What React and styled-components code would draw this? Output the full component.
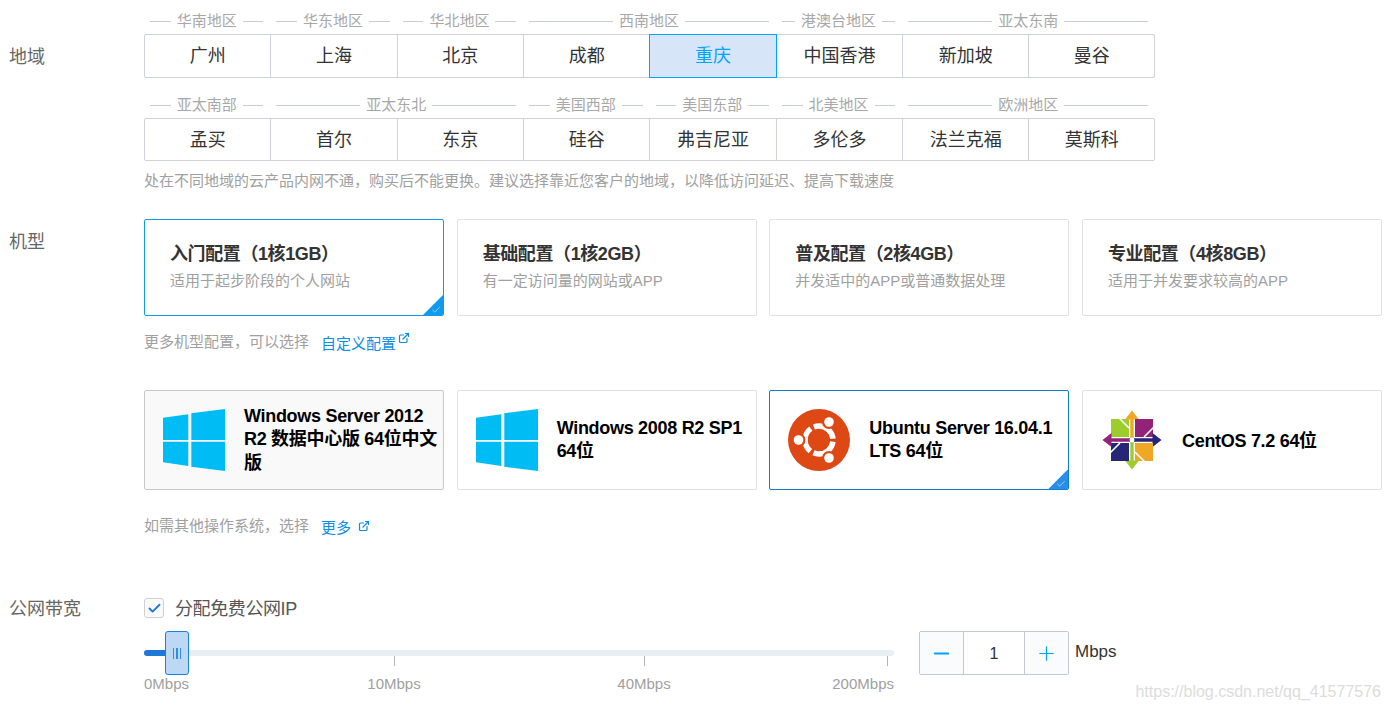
import React from "react";
import styled, { createGlobalStyle } from "styled-components";
import { Check, ExternalLink, Minus, Plus } from "lucide-react";

const GlobalStyle = createGlobalStyle`
  html, body {
    margin: 0;
    padding: 0;
    background: #fff;
    overflow: hidden;
  }
  body {
    font-family: "Liberation Sans", "Noto Sans CJK SC", sans-serif;
  }
`;

const Page = styled.div`
  position: relative;
  width: 1390px;
  height: 711px;
  padding: 8px 8px 0 9px;
  box-sizing: border-box;
`;

const Row = styled.section`
  display: flex;
  margin-top: ${(props) => props.$top || 0}px;
`;

const Label = styled.div`
  flex: 0 0 135px;
  font-size: 18px;
  line-height: 24px;
  color: #666;
  padding-top: ${(props) => props.$pad || 0}px;
`;

const Content = styled.div`
  width: 1238px;
`;

const Regions = styled.div`
  width: 1011px;
`;

const Groups = styled.div`
  display: grid;
  grid-template-columns: repeat(8, 1fr);
  height: 26px;
  margin-top: ${(props) => props.$top || 0}px;
`;

const Group = styled.div`
  grid-column: span ${(props) => props.$span || 1};
  display: flex;
  align-items: center;
  gap: 6px;
  margin: 0 7px 0 6px;
  height: 26px;
  font-size: 15px;
  color: #a8a8a8;
  white-space: nowrap;

  &::before,
  &::after {
    content: "";
    flex: 1;
    height: 1px;
    margin-top: 1px;
    background: #c8ccd8;
  }
`;

const GroupName = styled.span`
  margin-bottom: 3px;
`;

const Cities = styled.div`
  display: grid;
  grid-template-columns: repeat(7, 126.35px) 1fr;
  height: ${(props) => props.$height}px;
  box-sizing: border-box;
  border: 1px solid #cfd2dc;
  border-radius: 2px;
`;

const City = styled.div`
  display: flex;
  align-items: center;
  justify-content: center;
  padding-bottom: 4px;
  font-size: 18px;
  color: ${(props) => (props.$active ? "#00a4ff" : "#333")};
  background: ${(props) => (props.$active ? "#d6e5f8" : "transparent")};
  box-sizing: border-box;
  border-right: ${(props) => (props.$active ? "0" : "1px solid #cfd2dc")};
  margin-right: ${(props) => (props.$active ? 1 : 0)}px;
  outline: ${(props) => (props.$active ? "1px solid #00a4ff" : "none")};

  &:last-child {
    border-right: 0;
  }
`;

const Hint = styled.div`
  display: flex;
  align-items: center;
  box-sizing: border-box;
  height: 20px;
  padding-bottom: 3px;
  margin-top: ${(props) => props.$top || 0}px;
  font-size: 15px;
  color: #a0a0a0;
  white-space: nowrap;
`;

const MoreLink = styled.span`
  display: inline-flex;
  align-items: flex-start;
  gap: ${(props) => props.$gap || 2}px;
  margin-left: 12px;
  margin-top: 4px;
  color: #0a8ee8;

  svg {
    margin-top: ${(props) => props.$iconTop || 0}px;
  }
`;

const Cards = styled.div`
  display: grid;
  grid-template-columns: repeat(4, 300px);
  column-gap: 12.67px;
  margin-top: ${(props) => props.$top || 0}px;
`;

const Card = styled.div`
  position: relative;
  height: ${(props) => props.$height}px;
  box-sizing: border-box;
  border: 1px solid ${(props) => props.$accent || (props.$muted ? "#c8c8c8" : "#dfe1e6")};
  border-radius: 2px;
  background: ${(props) => (props.$muted ? "#f9f9f9" : "#fff")};
  overflow: hidden;
`;

const PlanCard = styled(Card)`
  padding: 21px 0 0 25px;
`;

const PlanTitle = styled.div`
  font-size: 18px;
  line-height: 26px;
  font-weight: 700;
  letter-spacing: -0.4px;
  color: #333;
`;

const PlanText = styled.div`
  margin-top: 1px;
  font-size: 15px;
  line-height: 26px;
  color: #a0a0a0;
`;

const OsCard = styled(Card)`
  display: flex;
  align-items: center;
  padding: 0 2px 0 18px;
  gap: 19px;
`;

const OsLogo = styled.svg`
  flex: 0 0 62px;
  width: 62px;
  height: 62px;
`;

const OsName = styled.div`
  margin-top: ${(props) => props.$nudge || 0}px;
  font-size: 18px;
  line-height: 23.5px;
  font-weight: 700;
  letter-spacing: -0.3px;
  color: #000;
`;

const Corner = styled.div`
  position: absolute;
  right: 0;
  bottom: 0;
  width: 20px;
  height: 20px;
  background: ${(props) => props.$accent};
  clip-path: polygon(100% 0, 100% 100%, 0 100%);
  color: #d8eeff;

  svg {
    position: absolute;
    right: 2px;
    bottom: 0;
  }
`;

const CheckRow = styled.div`
  display: flex;
  align-items: center;
  gap: 11px;
  height: 22px;
  font-size: 18px;
  color: #555;
`;

const CheckText = styled.span`
  margin-bottom: 2px;
  letter-spacing: -0.4px;
`;

const CheckBox = styled.div`
  display: flex;
  align-items: center;
  justify-content: center;
  width: 20px;
  height: 20px;
  box-sizing: border-box;
  border: 1px solid #d0d0d0;
  border-radius: 3px;
  background: #fafafa;
  color: #1f78d8;
`;

const BandwidthRow = styled.div`
  display: flex;
  align-items: flex-start;
  margin-top: 12px;
`;

const Slider = styled.div`
  position: relative;
  flex: 0 0 750px;
  padding-top: 19px;
`;

const Track = styled.div`
  height: 6px;
  border-radius: 3px;
  background: #e9edf4;
  overflow: hidden;
`;

const TrackFill = styled.div`
  width: 24px;
  height: 100%;
  background: #1f78d8;
`;

const Thumb = styled.div`
  position: absolute;
  left: 21px;
  top: 0;
  display: flex;
  align-items: center;
  justify-content: center;
  gap: 2px;
  width: 24px;
  height: 44px;
  box-sizing: border-box;
  border: 1px solid #1a7fe0;
  border-radius: 3px;
  background: #bcd8f5;
`;

const Grip = styled.span`
  width: 1.5px;
  height: 11px;
  background: #2f8fe6;
`;

const Scale = styled.div`
  display: grid;
  grid-template-columns: 125px 250px 250px 125px;
`;

const Tick = styled.span`
  grid-column: ${(props) => props.$col};
  justify-self: ${(props) => (props.$end ? "end" : "center")};
  margin-right: ${(props) => (props.$end ? 6 : 0)}px;
  width: 1px;
  height: 10px;
  background: #b4b4b4;
`;

const ScaleLabel = styled.span`
  justify-self: ${(props) => props.$align};
  margin-top: 8px;
  font-size: 15px;
  line-height: 20px;
  color: #a0a0a0;
`;

const Stepper = styled.div`
  display: flex;
  height: 44px;
  margin-left: 25px;
  box-sizing: border-box;
  border: 1px solid #c4c8d2;
  border-radius: 2px;
`;

const StepButton = styled.div`
  display: flex;
  align-items: center;
  justify-content: center;
  width: ${(props) => props.$width}px;
  background: #fafbfc;
  color: #00a4ff;
`;

const StepValue = styled.div`
  display: flex;
  align-items: center;
  justify-content: center;
  width: 60px;
  padding-top: 2px;
  border-left: 1px solid #c4c8d2;
  border-right: 1px solid #c4c8d2;
  font-size: 16px;
  color: #333;
`;

const Unit = styled.div`
  margin-left: 6px;
  font-size: 17px;
  line-height: 42px;
  color: #333;
`;

const Watermark = styled.div`
  position: absolute;
  right: 9px;
  bottom: 10px;
  font-size: 16px;
  line-height: 18px;
  color: #dcdcdc;
`;

const regionRows = [
  {
    height: 44,
    groups: [["华南地区"], ["华东地区"], ["华北地区"], ["西南地区", 2], ["港澳台地区"], ["亚太东南", 2]],
    cities: ["广州", "上海", "北京", "成都", "重庆", "中国香港", "新加坡", "曼谷"],
  },
  {
    height: 43,
    top: 14,
    groups: [["亚太南部"], ["亚太东北", 2], ["美国西部"], ["美国东部"], ["北美地区"], ["欧洲地区", 2]],
    cities: ["孟买", "首尔", "东京", "硅谷", "弗吉尼亚", "多伦多", "法兰克福", "莫斯科"],
  },
];

const plans = [
  { title: "入门配置（1核1GB）", text: "适用于起步阶段的个人网站", accent: "#0f9aee" },
  { title: "基础配置（1核2GB）", text: "有一定访问量的网站或APP" },
  { title: "普及配置（2核4GB）", text: "并发适中的APP或普通数据处理" },
  { title: "专业配置（4核8GB）", text: "适用于并发要求较高的APP" },
];

const WindowsLogo = () => (
  <OsLogo viewBox="0 0 62 62">
    <g fill="#00bcf5">
      <polygon points="0,8.7 25.3,5.3 25.3,31 0,31" />
      <polygon points="28.3,4.3 62,0 62,31 28.3,31" />
      <polygon points="0,32.7 25.3,32.7 25.3,57 0,53.3" />
      <polygon points="28.3,32.7 62,32.7 62,62 28.3,57.7" />
    </g>
  </OsLogo>
);

const UbuntuLogo = () => (
  <OsLogo viewBox="-31 -31 62 62">
    <circle r="31" fill="#dd4814" />
    <circle r="14" fill="none" stroke="#fff" strokeWidth="5.5" strokeDasharray="25.8 3.5" strokeDashoffset="-1.75" />
    <g fill="#dd4814">
      <circle cx="10" cy="-18" r="7" />
      <circle cx="10" cy="18" r="7" />
      <circle cx="-20.5" cy="0" r="7" />
    </g>
    <g fill="#fff">
      <circle cx="10" cy="-18" r="4.8" />
      <circle cx="10" cy="18" r="4.8" />
      <circle cx="-20.5" cy="0" r="4.8" />
    </g>
  </OsLogo>
);

// one quadrant + arrow, turned four times
const centosParts = [
  { angle: 0, square: "#9ccd2a", arrow: "#efa724" },
  { angle: 90, square: "#932279", arrow: "#262577" },
  { angle: 180, square: "#efa724", arrow: "#9ccd2a" },
  { angle: 270, square: "#262577", arrow: "#932279" },
];

const CentosLogo = () => (
  <OsLogo viewBox="-31 -31 62 62">
    {centosParts.map((part) => (
      <g key={part.angle} transform={`rotate(${part.angle})`}>
        <rect x="-21" y="-21" width="18" height="18" fill={part.square} />
        <path d="M-12.5 -21.5 L-3 -12" stroke="#fff" strokeWidth="1.6" fill="none" />
        <polygon points="0,-29.5 -7,-20.5 -1.7,-20.5 -1.7,-2 1.7,-2 1.7,-20.5 7,-20.5" fill={part.arrow} />
      </g>
    ))}
    <circle r="2.4" fill="#fff" />
  </OsLogo>
);

const CornerTick = ({ accent }) => (
  <Corner $accent={accent}>
    <Check size={10} strokeWidth={1.6} />
  </Corner>
);

export default function App() {
  return (
    <Page>
      <GlobalStyle />
      <Row>
        <Label $pad={37}>地域</Label>
        <Content>
          <Regions>
            {regionRows.map((row) => (
              <React.Fragment key={row.height}>
                <Groups $top={row.top}>
                  {row.groups.map(([name, span]) => (
                    <Group key={name} $span={span}>
                      <GroupName>{name}</GroupName>
                    </Group>
                  ))}
                </Groups>
                <Cities $height={row.height}>
                  {row.cities.map((city) => (
                    <City key={city} $active={city === "重庆"}>{city}</City>
                  ))}
                </Cities>
              </React.Fragment>
            ))}
          </Regions>
          <Hint $top={10}>处在不同地域的云产品内网不通，购买后不能更换。建议选择靠近您客户的地域，以降低访问延迟、提高下载速度</Hint>
        </Content>
      </Row>

      <Row $top={28}>
        <Label $pad={11}>机型</Label>
        <Content>
          <Cards>
            {plans.map((plan) => (
              <PlanCard key={plan.title} $height={97} $accent={plan.accent}>
                <PlanTitle>{plan.title}</PlanTitle>
                <PlanText>{plan.text}</PlanText>
                {plan.accent && <CornerTick accent={plan.accent} />}
              </PlanCard>
            ))}
          </Cards>
          <Hint $top={16}>
            更多机型配置，可以选择
            <MoreLink>
              自定义配置
              <ExternalLink size={12} strokeWidth={2.4} />
            </MoreLink>
          </Hint>

          <Cards $top={38}>
            <OsCard $height={100} $muted>
              <WindowsLogo />
              <OsName>Windows Server 2012 R2 数据中心版 64位中文版</OsName>
            </OsCard>
            <OsCard $height={100}>
              <WindowsLogo />
              <OsName>Windows 2008 R2 SP1 64位</OsName>
            </OsCard>
            <OsCard $height={100} $accent="#0b7ed8">
              <UbuntuLogo />
              <OsName>Ubuntu Server 16.04.1 LTS 64位</OsName>
              <CornerTick accent="#2a8de8" />
            </OsCard>
            <OsCard $height={100}>
              <CentosLogo />
              <OsName $nudge={3}>CentOS 7.2 64位</OsName>
            </OsCard>
          </Cards>
          <Hint $top={26}>
            如需其他操作系统，选择
            <MoreLink $gap={7} $iconTop={4}>
              更多
              <ExternalLink size={12} strokeWidth={2.4} />
            </MoreLink>
          </Hint>
        </Content>
      </Row>

      <Row $top={61}>
        <Label>公网带宽</Label>
        <Content>
          <CheckRow>
            <CheckBox>
              <Check size={15} strokeWidth={3} />
            </CheckBox>
            <CheckText>分配免费公网IP</CheckText>
          </CheckRow>
          <BandwidthRow>
            <Slider>
              <Track>
                <TrackFill />
              </Track>
              <Thumb>
                <Grip />
                <Grip />
                <Grip />
              </Thumb>
              <Scale>
                <Tick $col={2} />
                <Tick $col={3} />
                <Tick $col={4} $end />
              </Scale>
              <Scale>
                <ScaleLabel $align="start">0Mbps</ScaleLabel>
                <ScaleLabel $align="center">10Mbps</ScaleLabel>
                <ScaleLabel $align="center">40Mbps</ScaleLabel>
                <ScaleLabel $align="end">200Mbps</ScaleLabel>
              </Scale>
            </Slider>
            <Stepper>
              <StepButton $width={43}>
                <Minus size={23} strokeWidth={2.2} />
              </StepButton>
              <StepValue>1</StepValue>
              <StepButton $width={43}>
                <Plus size={23} strokeWidth={1.3} />
              </StepButton>
            </Stepper>
            <Unit>Mbps</Unit>
          </BandwidthRow>
        </Content>
      </Row>

      <Watermark>https://blog.csdn.net/qq_41577576</Watermark>
    </Page>
  );
}
